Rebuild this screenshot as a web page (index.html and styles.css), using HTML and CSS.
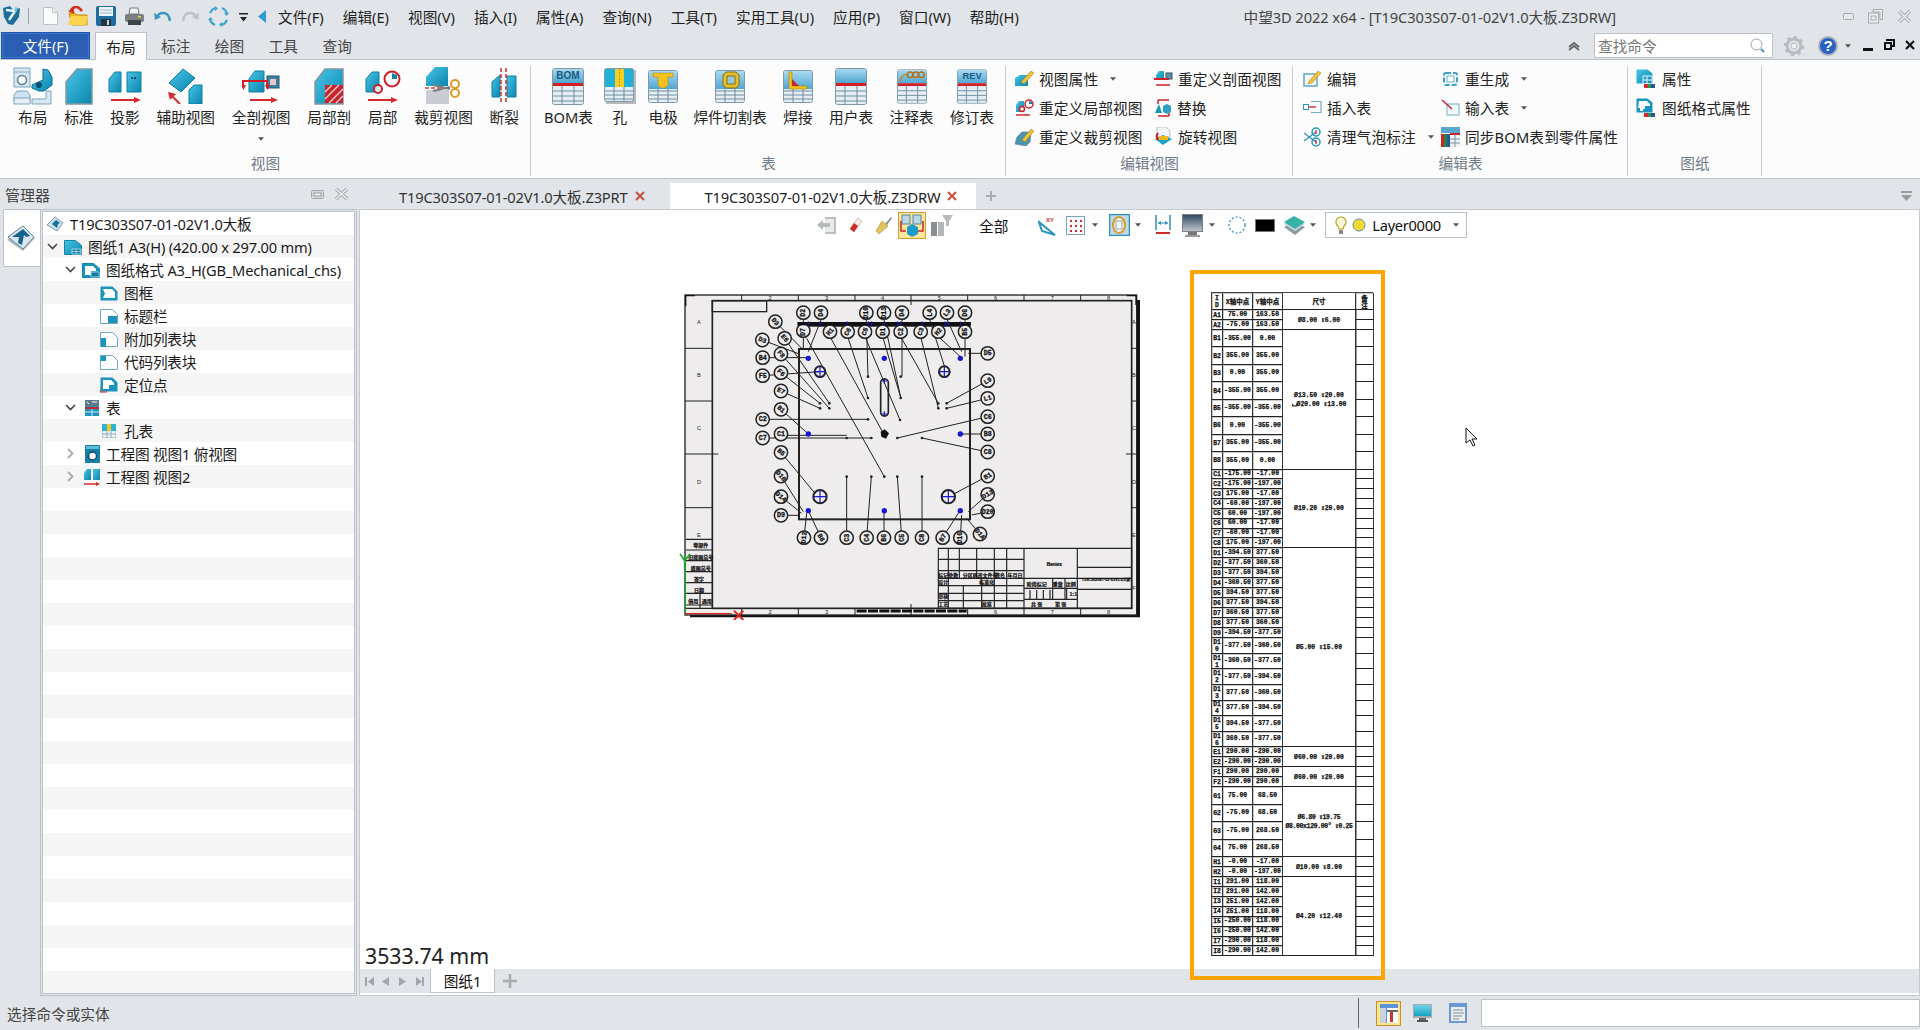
FILE: index.html
```html
<!DOCTYPE html>
<html lang="zh">
<head>
<meta charset="utf-8">
<title>中望3D 2022 x64</title>
<link rel="stylesheet" href="styles.css">
</head>
<body>
<svg class="sprite" width="0" height="0">
<defs>
<linearGradient id="gb" x1="0" y1="0" x2="1" y2="1"><stop offset="0" stop-color="#46c6e6"/><stop offset="1" stop-color="#0d84ad"/></linearGradient>
<linearGradient id="gh" x1="0" y1="0" x2="0" y2="1"><stop offset="0" stop-color="#a9d9f0"/><stop offset="1" stop-color="#4fa6d3"/></linearGradient>
<linearGradient id="gs" x1="0" y1="0" x2="0" y2="1"><stop offset="0" stop-color="#6fd2e8"/><stop offset="1" stop-color="#15a4c4"/></linearGradient>
<linearGradient id="gm" x1="0" y1="0" x2="0" y2="1"><stop offset="0" stop-color="#2e4660"/><stop offset="1" stop-color="#c0c8d0"/></linearGradient>
<symbol id="tbl" viewBox="0 0 32 37"><rect x=".5" y=".5" width="31" height="36" rx="2" fill="#e6eef3" stroke="#7d99aa"/><rect x="1" y="1" width="30" height="14" fill="url(#gh)"/><rect x="1" y="15" width="30" height="3" fill="#d11f26"/><path d="M1 23h30M1 28h30M1 33h30M10 18v18M22 18v18" stroke="#6d8da0" fill="none"/></symbol>
<symbol id="tb2" viewBox="0 0 30 33"><rect x=".5" y=".5" width="29" height="32" rx="2" fill="#e6eef3" stroke="#7d99aa"/><rect x="1" y="1" width="28" height="18" fill="url(#gh)"/><path d="M1 21h28M1 25h28M1 29h28M10 19v13M20 19v13" stroke="#6d8da0" fill="none"/></symbol>
<symbol id="sht" viewBox="0 0 18 16"><path d="M.5 1.500h11l6 5v9H.5z" fill="url(#gb)" stroke="#1482a8"/><path d="M8 10h9v5H8zM12 10v5M8 12.500h9" fill="#0d7ea6" stroke="#d5eef6" stroke-width=".7"/></symbol>
<symbol id="fmt" viewBox="0 0 18 16"><path d="M.5 1.500h11l6 5v9H.5z" fill="#1a93bd" stroke="#1482a8"/><path d="M3 4h8l3 3v2H9v4H3z" fill="#fff"/><path d="M9 10h8v5H9z" fill="#0d7ea6" stroke="#d5eef6" stroke-width=".7"/></symbol>
<symbol id="pg" viewBox="0 0 18 16"><path d="M.5 1.500h12l5 5v9H.5z" fill="#fff" stroke="#6aa8c4"/></symbol>
<symbol id="dp" viewBox="0 0 7 4"><path d="M0 0h7L3.500 4z" fill="#555"/></symbol>
</defs>
</svg>

<div class="app">
  <header class="titlebar">
    <svg class="logo" width="20" height="22" viewBox="0 0 20 22"><path d="M1 3l7-2 3 4 7-2-1 9-6 8-5-1-4-7z" fill="#1c6e9b"/><path d="M4 5l9 1-6 9" fill="none" stroke="#e8f4f8" stroke-width="2.500"/><path d="M13 2l3 1-3 6z" fill="#66c4dd"/></svg>
    <span class="vsep"></span>
    <span class="qa"><svg width="15" height="18" viewBox="0 0 15 18"><path d="M.5.500h9l5 5v12H.500z" fill="#fbfbfb" stroke="#bcc3c9"/><path d="M9.500.500v5h5" fill="#e9edf0" stroke="#bcc3c9"/></svg></span>
    <span class="qa"><svg width="20" height="20" viewBox="0 0 20 20"><path d="M1 7h6l2 2h10v10H4z" fill="#f2b91f" stroke="#c78f10"/><path d="M0 19l3-9h17l-2 9z" fill="#fbd34d"/><path d="M3 6a5 5 0 0 1 9-3l2 2" fill="none" stroke="#d42f1c" stroke-width="2.500"/><path d="M0 5l6 3v-6z" fill="#d42f1c"/></svg></span>
    <span class="qa"><svg width="20" height="20" viewBox="0 0 20 20"><rect width="20" height="20" rx="2" fill="#1e6c9f"/><rect x="3" y="1" width="14" height="9" fill="#eef4f7"/><path d="M4 4h12M4 7h12" stroke="#9fb8c6"/><rect x="5" y="13" width="10" height="7" fill="#26343f"/><rect x="11" y="14" width="2" height="5" fill="#ccd5da"/></svg></span>
    <span class="qa"><svg width="19" height="18" viewBox="0 0 19 18"><path d="M5 1h8l1 6H4z" fill="#eef0f1" stroke="#777"/><rect x="0" y="7" width="19" height="8" rx="2" fill="#7a7f84"/><rect x="3" y="13" width="13" height="5" fill="#3e4347"/><rect x="13" y="9" width="3" height="1.500" fill="#e9d53d"/></svg></span>
    <span class="qa"><svg width="17" height="11" viewBox="0 0 17 11"><path d="M3 6a6.500 6.500 0 0 1 12 0l1 4" fill="none" stroke="#3f94c0" stroke-width="2.500"/><path d="M0 2l1 7 6-3z" fill="#3f94c0"/></svg></span>
    <span class="qa"><svg width="17" height="11" viewBox="0 0 17 11"><path d="M14 6a6.500 6.500 0 0 0-12 0l-1 4" fill="none" stroke="#bcc2c6" stroke-width="2.500"/><path d="M17 2l-1 7-6-3z" fill="#bcc2c6"/></svg></span>
    <span class="qa"><svg width="21" height="21" viewBox="0 0 21 21"><path d="M7 2a9 9 0 0 0-5 5M14 2a9 9 0 0 1 5 5M19 14a9 9 0 0 1-5 5M2 14a9 9 0 0 0 5 5" fill="none" stroke="#3da3cf" stroke-width="2.200"/><path d="M7 0v5l3-2.500zM14 21v-5l-3 2.500zM21 7h-5l2.500 3zM0 14h5l-2.500-3z" fill="#3da3cf"/></svg></span>
    <span class="qd"><svg width="9" height="9" viewBox="0 0 9 9"><path d="M0 0h9v1.500H0zM1 4h7L4.500 8.500z" fill="#222"/></svg></span>
    <span class="qb"><svg width="8" height="13" viewBox="0 0 8 13"><path d="M8 0v13L0 6.500z" fill="#2f9bd0"/></svg></span>
    <nav class="menu">
      <span>文件(F)</span><span>编辑(E)</span><span>视图(V)</span><span>插入(I)</span><span>属性(A)</span><span>查询(N)</span><span>工具(T)</span><span>实用工具(U)</span><span>应用(P)</span><span>窗口(W)</span><span>帮助(H)</span>
    </nav>
    <span class="wintitle">中望3D 2022 x64 - [T19C303S07-01-02V1.0大板.Z3DRW]</span>
    <span class="winctl">
      <svg width="11" height="7" viewBox="0 0 11 7"><rect x=".5" y=".5" width="10" height="6" rx="1" fill="#e6e9ec" stroke="#a4a9ae"/></svg>
      <svg width="15" height="15" viewBox="0 0 15 15"><path d="M5 .500h9.500v10H12V3H5z" fill="#eceff1" stroke="#a4a9ae"/><rect x=".5" y="4" width="10" height="10" fill="#eceff1" stroke="#a4a9ae"/><rect x="3" y="7" width="5" height="4" fill="none" stroke="#a4a9ae"/></svg>
      <svg width="15" height="13" viewBox="0 0 15 13"><path d="M2 1l11 11M13 1L2 12" stroke="#a4a9ae" stroke-width="3.500"/><path d="M2 1l11 11M13 1L2 12" stroke="#eef0f2" stroke-width="1.500"/></svg>
    </span>
  </header>

  <div class="tabbar">
    <span class="filebtn">文件(F)</span>
    <span class="rtab active">布局</span>
    <span class="rtab first">标注</span>
    <span class="rtab">绘图</span>
    <span class="rtab">工具</span>
    <span class="rtab">查询</span>
    <span class="tabright">
      <svg width="14" height="10" viewBox="0 0 14 10"><path d="M2 6l5-4 5 4M2 9l5-4 5 4" fill="none" stroke="#666" stroke-width="1.800"/></svg>
      <span class="search"><span>查找命令</span><svg width="15" height="15" viewBox="0 0 15 15"><circle cx="6.500" cy="6.500" r="5.500" fill="#fff" stroke="#9aa0a5"/><path d="M11 11l3 3" stroke="#4f8fb5" stroke-width="2"/></svg></span>
      <svg class="gear" width="20" height="20" viewBox="0 0 20 20"><circle cx="10" cy="10" r="7" fill="none" stroke="#b8bcc0" stroke-width="3"/><circle cx="10" cy="10" r="9" fill="none" stroke="#b8bcc0" stroke-width="2.500" stroke-dasharray="3 4"/><circle cx="10" cy="10" r="3" fill="#eef0f1" stroke="#bbb"/></svg>
      <svg class="help" width="20" height="20" viewBox="0 0 20 20"><circle cx="10" cy="10" r="10" fill="#a9b2bc"/><circle cx="10" cy="10" r="8" fill="#2a62c4"/><text x="10" y="15" class="helpq">?</text></svg>
      <svg class="hd" width="6" height="4"><use href="#dp"/></svg>
      <svg class="wm" width="10" height="3" viewBox="0 0 10 3"><rect width="10" height="3" fill="#111"/></svg>
      <svg class="wr" width="11" height="11" viewBox="0 0 11 11"><path d="M3 2V1h7v6H8" fill="none" stroke="#111" stroke-width="2"/><rect x="1" y="4" width="6" height="6" fill="none" stroke="#111" stroke-width="2"/></svg>
      <svg class="wx" width="10" height="10" viewBox="0 0 10 10"><path d="M1 1l8 8M9 1L1 9" stroke="#111" stroke-width="2.200"/></svg>
    </span>
  </div>

  <section class="ribbon">
    <div class="group g1">
      <div class="large">
        <div class="item"><span class="ic"><svg width="40" height="38" viewBox="0 0 40 38"><path d="M1 1h16v19H1z" fill="#d7e7f2" stroke="#7ea6bf"/><path d="M1 5h16" stroke="#7ea6bf"/><circle cx="9" cy="13" r="4.500" fill="#fff" stroke="#567f97" stroke-width="1.500"/><path d="M19 18l11-5V2l5 1 4 7v8l-8 6h-5l-7-3z" fill="url(#gb)" stroke="#0d6f93"/><circle cx="26" cy="18" r="3" fill="#0a4f6c"/><path d="M1 34V28l3-4h10l3 4v6z" fill="#cfe2ef" stroke="#7ea6bf"/><path d="M1 31h16v6H1z" fill="#e3eef5" stroke="#7ea6bf"/><path d="M19 37v-5h14V24h5v13z" fill="#d7e7f2" stroke="#7ea6bf"/></svg></span><span>布局</span></div>
        <div class="item"><span class="ic"><svg width="28" height="37" viewBox="0 0 28 37"><path d="M1 14L12 1h15v35H1z" fill="url(#gb)" stroke="#8496a3" stroke-width="1.500"/></svg></span><span>标准</span></div>
        <div class="item"><span class="ic"><svg width="34" height="33" viewBox="0 0 34 33"><path d="M1 9l6-7h6v20H1z" fill="url(#gb)" stroke="#0e7ea5"/><path d="M19 2h14v20H19z" fill="url(#gb)" stroke="#0e7ea5"/><path d="M23 8h6" stroke="#114c66" stroke-width="2" stroke-dasharray="2 1"/><path d="M3 30h24" stroke="#d52b30" stroke-width="2"/><path d="M33 30l-7-3v6z" fill="#d52b30"/></svg></span><span>投影</span></div>
        <div class="item"><span class="ic"><svg width="36" height="36" viewBox="0 0 36 36"><path d="M1 15L15 1l12 9-14 14z" fill="url(#gb)" stroke="#0e7ea5"/><path d="M21 22l5-5h8v19H21z" fill="url(#gb)" stroke="#0e7ea5"/><path d="M12 36L3 27" stroke="#d52b30" stroke-width="2"/><path d="M0 24l8 2-6 6z" fill="#d52b30"/></svg></span><span>辅助视图</span></div>
        <div class="item"><span class="ic"><svg width="38" height="33" viewBox="0 0 38 33"><path d="M7 9l6-8h9v21H7z" fill="url(#gb)" stroke="#0e7ea5"/><rect x="25" y="6" width="12" height="12" fill="#3b7fa0" stroke="#20546d"/><rect x="28" y="9" width="6" height="6" fill="#e9c7c8"/><path d="M1 16v-5h24v5" fill="none" stroke="#cf1f25" stroke-width="2"/><path d="M-1 15h5l-2.500 5zM23 15h5l-2.500 5z" fill="#cf1f25"/><path d="M8 30h24" stroke="#d52b30" stroke-width="2"/><path d="M36 30l-7-3v6z" fill="#d52b30"/></svg></span><span>全剖视图</span><svg class="more" width="6" height="4"><use href="#dp"/></svg></div>
        <div class="item"><span class="ic"><svg width="30" height="37" viewBox="0 0 30 37"><path d="M1 14L11 1h18v35H1z" fill="url(#gb)" stroke="#8496a3" stroke-width="1.500"/><rect x="11" y="17" width="18" height="18" fill="#c9242b"/><path d="M11 31l14-14M15 35l14-14M11 24l7-7M22 35l7-7" stroke="#f3c7c8" stroke-width="1.500"/></svg></span><span>局部剖</span></div>
        <div class="item"><span class="ic"><svg width="36" height="33" viewBox="0 0 36 33"><path d="M1 9l6-7h7v20H1z" fill="url(#gb)" stroke="#0e7ea5"/><circle cx="13" cy="19" r="4" fill="#d5eef6" stroke="#cc2027" stroke-width="2"/><circle cx="27" cy="9" r="7.500" fill="#fff" stroke="#cc2027" stroke-width="2"/><path d="M27 9V3l5 2v4z" fill="#0e86ae"/><path d="M3 30h24" stroke="#d52b30" stroke-width="2"/><path d="M33 30l-7-3v6z" fill="#d52b30"/></svg></span><span>局部</span></div>
        <div class="item"><span class="ic"><svg width="36" height="38" viewBox="0 0 36 38"><path d="M1 10L10 0h13v19H1z" fill="url(#gb)"/><path d="M1 23h23v14H1z" fill="#c9cdd1"/><path d="M0 21h22" stroke="#d23b3e" stroke-width="1.500" stroke-dasharray="4 2"/><path d="M8 18l17 4M8 24l17-4" stroke="#7c7c7c" stroke-width="2"/><circle cx="30" cy="17" r="4" fill="none" stroke="#dd9a2a" stroke-width="2"/><circle cx="30" cy="26" r="4" fill="none" stroke="#dd9a2a" stroke-width="2"/></svg></span><span>裁剪视图</span></div>
        <div class="item"><span class="ic"><svg width="26" height="36" viewBox="0 0 26 36"><path d="M1 14l8-7v22H1z" fill="url(#gb)" stroke="#0e7ea5"/><path d="M16 8h9v21h-9z" fill="url(#gb)" stroke="#0e7ea5"/><path d="M10 0v36M15 0v36" stroke="#cf2a2e" stroke-width="1.500" stroke-dasharray="4 2"/></svg></span><span>断裂</span></div>
      </div>
      <div class="glabel">视图</div>
    </div>

    <div class="group g2">
      <div class="large tight">
        <div class="item bom"><span class="ic"><svg width="32" height="37" viewBox="0 0 32 37"><use href="#tbl" width="32" height="37"/><text x="16" y="11" class="ictext">BOM</text></svg></span><span>BOM表</span></div>
        <div class="item hole"><span class="ic"><svg width="32" height="36" viewBox="0 0 32 36"><rect x="2" y="2" width="30" height="34" fill="#b7b9bb"/><rect x=".5" y=".5" width="29" height="33" rx="2" fill="#e6eef3" stroke="#7d99aa"/><rect x="1" y="1" width="28" height="18" fill="#1fb1d7"/><rect x="11" y="1" width="9" height="18" fill="#f5cf22"/><path d="M15.500 1v18" stroke="#c7950f" stroke-dasharray="2 1"/><path d="M1 23h28M1 27h28M1 31h28M10 19v14M20 19v14" stroke="#6d8da0"/></svg></span><span>孔</span></div>
        <div class="item elec"><span class="ic"><svg width="30" height="33" viewBox="0 0 30 33"><use href="#tb2" width="30" height="33"/><path d="M5 3h20v4h-5v8l-3 3h-4l-3-3V7H5z" fill="#f3c21f" stroke="#b48b10" stroke-width=".6"/></svg></span><span>电极</span></div>
        <div class="item"><span class="ic"><svg width="30" height="33" viewBox="0 0 30 33"><use href="#tb2" width="30" height="33"/><path d="M8 5l3-3h10l3 3v10l-3 3H11l-3-3z" fill="#e3bf2d" stroke="#866f12"/><rect x="12" y="6" width="8" height="8" fill="#97c9d9" stroke="#866f12"/></svg></span><span>焊件切割表</span></div>
        <div class="item"><span class="ic"><svg width="30" height="33" viewBox="0 0 30 33"><use href="#tb2" width="30" height="33"/><path d="M6 2h3v14h15v3H6z" fill="#f3c21f" stroke="#a88510" stroke-width=".6"/><path d="M9 9v7h7z" fill="#c9252b"/></svg></span><span>焊接</span></div>
        <div class="item"><span class="ic"><svg width="32" height="37" viewBox="0 0 32 37"><use href="#tbl" width="32" height="37"/></svg></span><span>用户表</span></div>
        <div class="item"><span class="ic"><svg width="30" height="37" viewBox="0 0 32 37"><use href="#tbl" width="32" height="37"/><path d="M3 13c2-7 6-8 9-8" fill="none" stroke="#c78a1a" stroke-width="1.500"/><circle cx="14" cy="6" r="3" fill="none" stroke="#b5701a" stroke-width="1.500"/><circle cx="20" cy="6" r="3" fill="none" stroke="#b5701a" stroke-width="1.500"/><circle cx="26" cy="6" r="3" fill="none" stroke="#b5701a" stroke-width="1.500"/></svg></span><span>注释表</span></div>
        <div class="item"><span class="ic"><svg width="30" height="37" viewBox="0 0 32 37"><use href="#tbl" width="32" height="37"/><text x="16" y="11" class="ictext">REV</text></svg></span><span>修订表</span></div>
      </div>
      <div class="glabel">表</div>
    </div>

    <div class="group g3">
      <div class="small">
        <div class="row w139"><svg width="19" height="18" viewBox="0 0 19 18"><path d="M0 8l5-3h8v11H0z" fill="url(#gb)"/><path d="M6 12L16 1l3 2-10 11z" fill="#f0c238" stroke="#997c1e" stroke-width=".5"/></svg><span>视图属性</span><svg class="dd" width="6" height="4"><use href="#dp"/></svg></div>
        <div class="row"><svg width="19" height="17" viewBox="0 0 19 17"><path d="M2 5l3-4h5v9H2z" fill="url(#gb)"/><rect x="12" y="3" width="6" height="6" fill="#5e8ea6" stroke="#2a5970"/><path d="M0 9h15" stroke="#cf2127" stroke-width="2"/><path d="M2 15h14" stroke="#cf2127" stroke-width="1.500"/></svg><span>重定义剖面视图</span></div>
        <div class="row"><svg width="19" height="18" viewBox="0 0 19 18"><path d="M1 6l3-4h5v11H1z" fill="url(#gb)"/><circle cx="7" cy="10" r="2.500" fill="#fff" stroke="#cc2027" stroke-width="1.500"/><circle cx="14" cy="5" r="4" fill="#fff" stroke="#cc2027" stroke-width="1.500"/><path d="M14 5V2l3 1v2z" fill="#0e86ae"/><path d="M1 16h14" stroke="#d52b30" stroke-width="1.500"/></svg><span>重定义局部视图</span></div>
        <div class="row"><svg width="18" height="18" viewBox="0 0 18 18"><path d="M4 1h11M4 1v4M15 17H4M15 17v-4" fill="none" stroke="#c8252b" stroke-width="1.500"/><path d="M1 14l4-9 3 9z" fill="#1995ba"/><path d="M9 7l4-2 4 2v6l-4 2-4-2z" fill="#2f9fc4"/></svg><span>替换</span></div>
        <div class="row"><svg width="19" height="18" viewBox="0 0 19 18"><path d="M0 16l2-7 5-5h9l-1 10-4 4z" fill="#4a94ad" stroke="#5a7a8a" stroke-width=".6"/><path d="M7 12L16 1l3 2-9 11z" fill="#f0c238" stroke="#997c1e" stroke-width=".5"/></svg><span>重定义裁剪视图</span></div>
        <div class="row"><svg width="19" height="19" viewBox="0 0 19 19"><path d="M3 0h9l4 4v6H3z" fill="#f2f4f5" stroke="#b8bfc4"/><path d="M1 12l8 6 9-6-9-4z" fill="#19a3c9"/><path d="M5 9h9v4H5z" fill="#f3b81e"/><path d="M4 6a6 6 0 0 0 0 7" fill="none" stroke="#cd2027" stroke-width="2"/></svg><span>旋转视图</span></div>
      </div>
      <div class="glabel">编辑视图</div>
    </div>

    <div class="group g4">
      <div class="small">
        <div class="row w138"><svg width="19" height="17" viewBox="0 0 19 17"><rect x="1" y="4" width="13" height="12" fill="#f4f8fa" stroke="#5da6c6" stroke-width="1.500"/><path d="M6 11L15 1l3 2-9 10-4 1z" fill="#f0c238" stroke="#997c1e" stroke-width=".5"/></svg><span>编辑</span></div>
        <div class="row"><svg width="19" height="18" viewBox="0 0 19 18"><rect x="3" y="3" width="13" height="12" rx="2" fill="#f6fafc" stroke="#3fa0c5" stroke-width="2" stroke-dasharray="5 2"/><rect x="6" y="6" width="7" height="6" fill="#fff" stroke="#5cb3d0"/></svg><span>重生成</span><svg class="dd" width="6" height="4"><use href="#dp"/></svg></div>
        <div class="row"><svg width="19" height="13" viewBox="0 0 19 13"><rect x=".5" y="3.500" width="5" height="5" fill="#fff" stroke="#2b94bd"/><path d="M6 6h7" stroke="#c8252b" stroke-width="1.300"/><path d="M8 .500h10v11H8" fill="none" stroke="#73afca" stroke-width="1.200"/></svg><span>插入表</span></div>
        <div class="row"><svg width="19" height="17" viewBox="0 0 19 17"><rect x="6" y="5" width="12" height="11" fill="#f3f8fa" stroke="#73afca"/><path d="M1 1l10 9" stroke="#c8252b" stroke-width="1.500"/></svg><span>输入表</span><svg class="dd" width="6" height="4"><use href="#dp"/></svg></div>
        <div class="row"><svg width="19" height="20" viewBox="0 0 19 20"><circle cx="13" cy="5" r="4" fill="#f5fafc" stroke="#2b94bd" stroke-width="1.500"/><circle cx="13" cy="15" r="4" fill="#f5fafc" stroke="#2b94bd" stroke-width="1.500"/><path d="M1 14L13 5M1 6l12 9" stroke="#2b94bd" stroke-width="1.300"/><path d="M13 3v4M13 13v4" stroke="#c8252b" stroke-width="1.300"/></svg><span>清理气泡标注</span><svg class="dd" width="6" height="4"><use href="#dp"/></svg></div>
        <div class="row"><svg width="19" height="20" viewBox="0 0 19 20"><rect width="19" height="6" fill="#5ba6cf"/><rect y="7" width="19" height="13" fill="#eef3f6"/><rect y="7" width="3" height="13" fill="#c9252b"/><rect x="3" y="7" width="3" height="13" fill="#1f8a36"/><rect x="6" y="7" width="3" height="13" fill="#2b4ea8"/><path d="M9 7h10" stroke="#c9252b" stroke-width="2"/><path d="M9 12h10M9 16h10M14 8v12" stroke="#7b93a3"/></svg><span>同步BOM表到零件属性</span></div>
      </div>
      <div class="glabel">编辑表</div>
    </div>

    <div class="group g5">
      <div class="small one">
        <div class="row"><svg width="19" height="19" viewBox="0 0 19 19"><path d="M.5.500h11l5 4v10H.500z" fill="url(#gb)"/><path d="M7 7h9v8H7zM11 7v8M7 11h9" fill="none" stroke="#e6f6fb"/><rect x="8" y="15" width="4" height="4" fill="#d5272d"/><rect x="12" y="15" width="3" height="4" fill="#1f9e3a"/><rect x="15" y="15" width="4" height="4" fill="#2b4ea8"/></svg><span>属性</span></div>
        <div class="row"><svg width="19" height="19" viewBox="0 0 19 19"><path d="M.5.500h11l5 4v10H.500z" fill="#1a93bd"/><path d="M3 3h8l3 3v2H9v3H7v2H4v-3H2z" fill="#fff"/><rect x="8" y="15" width="4" height="4" fill="#d5272d"/><rect x="12" y="15" width="3" height="4" fill="#1f9e3a"/><rect x="15" y="15" width="4" height="4" fill="#2b4ea8"/></svg><span>图纸格式属性</span></div>
      </div>
      <div class="glabel">图纸</div>
    </div>
  </section>

  <div class="docbar">
    <div class="mgrhead"><span>管理器</span><span class="mgrbtns">
      <svg width="13" height="9" viewBox="0 0 13 9"><rect x=".5" y=".5" width="12" height="8" rx="1" fill="#d5d8db" stroke="#a4a9ae"/><rect x="3" y="3" width="7" height="3" fill="#eef0f2" stroke="#999"/></svg>
      <svg width="15" height="12" viewBox="0 0 15 12"><path d="M2 1l11 10M13 1L2 11" stroke="#a4a9ae" stroke-width="3.500"/><path d="M2 1l11 10M13 1L2 11" stroke="#eef0f2" stroke-width="1.500"/></svg>
    </span></div>
    <div class="doctab"><span>T19C303S07-01-02V1.0大板.Z3PRT</span><svg width="12" height="12" viewBox="0 0 12 12"><path d="M2 2l8 8M10 2l-8 8" stroke="#c4503a" stroke-width="2"/></svg></div>
    <div class="doctab cur"><span>T19C303S07-01-02V1.0大板.Z3DRW</span><svg width="12" height="12" viewBox="0 0 12 12"><path d="M2 2l8 8M10 2l-8 8" stroke="#c4503a" stroke-width="2"/></svg></div>
    <svg class="docadd" width="12" height="12" viewBox="0 0 12 12"><path d="M6 1v10M1 6h10" stroke="#a8adb2" stroke-width="2"/></svg>
    <svg class="docmenu" width="11" height="10" viewBox="0 0 11 10"><path d="M0 0h11v2H0z" fill="#9b9b9b"/><path d="M0 4h11L5.500 10z" fill="#9b9b9b"/></svg>
  </div>

  <main class="main">
    <aside class="side">
      <div class="sidetab"><svg width="30" height="27" viewBox="0 0 30 27"><path d="M1 15L17 26l12-13L25 10 15 22 3 13z" fill="#aeb9c1"/><path d="M2 12L17 1l11 11-11 12z" fill="#dbe8f0" stroke="#5f8396"/><path d="M6 12l11-8 7 7-4 1-2-2-2 10-4-2 1-6z" fill="#15648f"/></svg></div>
    </aside>
    <div class="treeframe">
      <div class="tree">
        <div class="tr l0"><svg width="18" height="16" viewBox="0 0 18 16"><path d="M1 9l8-8 8 6-6 8z" fill="#cfdfe8" stroke="#7ba0b5"/><path d="M6 8l4-4 4 3-2 1-1 4z" fill="#146f9b"/></svg><span>T19C303S07-01-02V1.0大板</span></div>
        <div class="tr l1"><svg class="chev" width="11" height="7" viewBox="0 0 11 7"><path d="M1 1l4.500 4.500L10 1" fill="none" stroke="#444" stroke-width="1.600"/></svg><svg width="18" height="16"><use href="#sht"/></svg><span>图纸1 A3(H) (420.00 x 297.00 mm)</span></div>
        <div class="tr l2"><svg class="chev" width="11" height="7" viewBox="0 0 11 7"><path d="M1 1l4.500 4.500L10 1" fill="none" stroke="#444" stroke-width="1.600"/></svg><svg width="18" height="16"><use href="#fmt"/></svg><span>图纸格式 A3_H(GB_Mechanical_chs)</span></div>
        <div class="tr l3"><svg width="18" height="16" viewBox="0 0 18 16"><path d="M.5 1.500h12l5 5v9H.5z" fill="#1a93bd"/><path d="M3 4h9l3 3v6H3l2-4.500z" fill="#fff"/></svg><span>图框</span></div>
        <div class="tr l3"><svg width="18" height="16"><use href="#pg"/><rect x="8" y="8" width="9" height="7" fill="#1a93bd"/></svg><span>标题栏</span></div>
        <div class="tr l3"><svg width="18" height="16"><use href="#pg"/><rect x="1" y="7" width="5" height="9" fill="#1a93bd"/></svg><span>附加列表块</span></div>
        <div class="tr l3"><svg width="18" height="16"><use href="#pg"/><rect x="1" y="2" width="5" height="5" fill="#1a93bd"/></svg><span>代码列表块</span></div>
        <div class="tr l3"><svg width="18" height="17" viewBox="0 0 18 17"><path d="M.5 1.500h12l5 5v9H.5z" fill="#1a93bd"/><path d="M3 4h8l3 3v2H9v4H3z" fill="#fff"/><path d="M0 11v5h7" fill="none" stroke="#c8252b"/></svg><span>定位点</span></div>
        <div class="tr l2 lt"><svg class="chev" width="11" height="7" viewBox="0 0 11 7"><path d="M1 1l4.500 4.500L10 1" fill="none" stroke="#444" stroke-width="1.600"/></svg><svg width="14" height="16" viewBox="0 0 14 16"><rect width="14" height="16" fill="#1a93bd"/><rect width="14" height="6" fill="#5d7b8c"/><path d="M2 2l2 2M7 2h5" stroke="#fff"/><rect y="7" width="14" height="2" fill="#c9252b"/><path d="M0 12h14M7 9v7" stroke="#d0e8f1"/></svg><span>表</span></div>
        <div class="tr l3"><svg class="i14" width="14" height="14" viewBox="0 0 14 14"><rect width="14" height="14" fill="#eef3f6" stroke="#93a9b7"/><rect width="14" height="7" fill="#2eb3d6"/><rect x="5" width="4" height="7" fill="#f3c522"/><path d="M0 10h14M5 7v7M9 7v7" stroke="#93a9b7"/></svg><span>孔表</span></div>
        <div class="tr l2 lt"><svg class="chev" width="7" height="11" viewBox="0 0 7 11"><path d="M1 1l4.500 4.500L1 10" fill="none" stroke="#aaa" stroke-width="1.800"/></svg><svg class="i15" width="15" height="18" viewBox="0 0 15 18"><rect width="15" height="18" rx="1" fill="#1482a8"/><rect x="1" y="1" width="13" height="3" fill="#5fbbd6"/><circle cx="7.500" cy="11" r="4" fill="#fff" stroke="#0b4f6c" stroke-width="1.500"/></svg><span>工程图 视图1 俯视图</span></div>
        <div class="tr l2 lt"><svg class="chev" width="7" height="11" viewBox="0 0 7 11"><path d="M1 1l4.500 4.500L1 10" fill="none" stroke="#aaa" stroke-width="1.800"/></svg><svg class="i18" width="18" height="18" viewBox="0 0 18 18"><path d="M1 5l3-4h4v11H1z" fill="url(#gb)"/><path d="M10 1h7v11h-7z" fill="url(#gb)"/><path d="M1 16h13" stroke="#d52b30" stroke-width="1.500"/><path d="M17 16l-4-2v4z" fill="#d52b30"/></svg><span>工程图 视图2</span></div>
      </div>
    </div>

    <div class="view">
      <div class="vtools">
        <svg width="19" height="17" viewBox="0 0 19 17"><path d="M8 1h10v15H8" fill="#e8eaec" stroke="#a9adb1" stroke-width="1.500"/><path d="M0 8l6-5v3h7v4H6v3z" fill="#b8bcbf"/></svg>
        <svg class="m13" width="14" height="16" viewBox="0 0 14 16"><path d="M1 12L9 1l4 3-8 11z" fill="#f2ede6" stroke="#b09b84" stroke-width=".6"/><path d="M1 12l4-6 4 3-4 6z" fill="#cf2a2a"/></svg>
        <svg class="m12" width="17" height="17" viewBox="0 0 17 17"><path d="M10 7l6-7 1 1-5 7z" fill="#8a8f93"/><path d="M1 14l6-10 6 5-9 8z" fill="#e2c35f" stroke="#a88d33" stroke-width=".6"/></svg>
        <span class="activebtn m6"><svg width="24" height="23" viewBox="0 0 24 23"><rect x="2" y="1" width="8" height="9" fill="#bcd8e6" stroke="#54889f"/><rect x="13" y="1" width="8" height="9" fill="#bcd8e6" stroke="#54889f"/><path d="M7 13l5-3 6 3v7l-6 3-5-3z" fill="#1d9ccc"/><path d="M1 7v10h5M23 7v10h-5" fill="none" stroke="#c8252b" stroke-width="1.500"/></svg></span>
        <svg class="m5" width="22" height="21" viewBox="0 0 22 21"><rect y="7" width="6" height="14" fill="#8c8f91"/><rect x="7" y="7" width="6" height="14" fill="#b3b5b7"/><path d="M11 0h11l-4 6v5h-3V6z" fill="#b7b9ba"/></svg>
        <span class="alltext">全部</span>
        <svg class="m30" width="19" height="21" viewBox="0 0 19 21"><text x="12" y="7" class="xy">XY</text><path d="M1 7l16 13L4 16z" fill="none" stroke="#2b94bd" stroke-width="2"/></svg>
        <svg class="m9" width="19" height="19" viewBox="0 0 19 19"><rect x=".5" y=".5" width="18" height="18" fill="#fff" stroke="#7da1b6"/><path d="M4 4h2v2H4zM9 4h2v2H9zM14 4h2v2h-2zM4 9h2v2H4zM9 9h2v2H9zM14 9h2v2h-2zM4 14h2v2H4zM9 14h2v2H9zM14 14h2v2h-2z" fill="#d22a2f"/></svg>
        <svg class="m7" width="6" height="4"><use href="#dp"/></svg>
        <svg class="m11" width="21" height="22" viewBox="0 0 21 22"><rect x=".5" y=".5" width="20" height="21" fill="#bedaea" stroke="#2f8fb7" stroke-width="1.500"/><ellipse cx="10" cy="11" rx="6" ry="8" fill="#eef3f6" stroke="#d89b28" stroke-width="2"/><rect x="7" y="7" width="6" height="8" fill="#fff" stroke="#8aa"/></svg>
        <svg class="m5" width="6" height="4"><use href="#dp"/></svg>
        <svg class="m14" width="16" height="21" viewBox="0 0 16 21"><path d="M1 0v15M15 0v15" stroke="#2f8fb7" stroke-width="1.500"/><path d="M3 8h10" stroke="#2f8fb7"/><path d="M1 18h14" stroke="#cf2a2e" stroke-width="2"/><path d="M3 8l3-2v4zM13 8l-3-2v4z" fill="#2f8fb7"/></svg>
        <svg class="m11" width="21" height="23" viewBox="0 0 21 23"><rect x=".5" y=".5" width="20" height="17" fill="url(#gm)" stroke="#7b8085"/><rect x="6" y="18" width="9" height="3" fill="#777"/><rect x="3" y="21" width="15" height="2" fill="#999"/></svg>
        <svg class="m6" width="6" height="4"><use href="#dp"/></svg>
        <svg class="m13" width="18" height="18" viewBox="0 0 18 18"><circle cx="9" cy="9" r="8" fill="none" stroke="#4e9bc0" stroke-width="1.500" stroke-dasharray="2 2"/></svg>
        <span class="blackswatch m9"></span>
        <svg class="m9" width="21" height="19" viewBox="0 0 21 19"><path d="M0 11l10-5 11 5-10 8z" fill="#8d9ba5"/><path d="M0 8l10-5 11 5-10 7z" fill="#c7d2d8"/><path d="M0 6l10-6 11 6-10 7z" fill="#36b2a6"/></svg>
        <svg class="m5" width="6" height="4"><use href="#dp"/></svg>
        <div class="layerbox m9"><svg width="12" height="19" viewBox="0 0 12 19"><path d="M6 1a5 5 0 0 1 3 9l-1 3H4l-1-3a5 5 0 0 1 3-9z" fill="#fbf9d5" stroke="#b79c2b" stroke-width="1.200"/><rect x="4" y="14" width="4" height="4" fill="#8a8a8a"/></svg><svg class="lc" width="14" height="14" viewBox="0 0 14 14"><circle cx="7" cy="7" r="6" fill="#f2d92f" stroke="#5b8aa8"/></svg><span class="lname">Layer0000</span><svg class="ld" width="6" height="4"><use href="#dp"/></svg></div>
      </div>

      <div class="canvas">
        <svg class="drawing" width="480" height="340" viewBox="0 0 1440 1020">
          <path d="M60 60H1410V1012H60z" fill="#111"/>
          <rect x="45" y="45" width="1355" height="960" fill="#eeeced" stroke="#222" stroke-width="4"/>
          <path d="M45 45h30v4H49v30h-4zM1370 45h30v30h-4V49h-26z" fill="#111"/>
          <rect x="127" y="62" width="1258" height="923" fill="none" stroke="#222" stroke-width="5"/>
          <rect x="127" y="62" width="163" height="33" fill="none" stroke="#222" stroke-width="4"/>
          <path d="M45 205h82M45 363h82M45 522h100M45 683h82M1385 205h15M1385 363h15M1368 522h32M1385 683h15M215 45v17M385 45v17M555 45v17M723 45v30M893 45v17M1062 45v17M1232 45v17M215 985v20M385 985v20M555 985v20M723 972v33M893 985v20M1062 985v20M1232 985v20" stroke="#222" stroke-width="3" fill="none"/>
          <g class="zone">
            <text x="87" y="133">A</text><text x="87" y="291">B</text><text x="87" y="451">C</text><text x="87" y="611">D</text><text x="87" y="771">E</text>
            <text x="1392" y="133">A</text><text x="1392" y="291">B</text><text x="1392" y="451">C</text><text x="1392" y="611">D</text><text x="1392" y="771">E</text><text x="1392" y="931">F</text>
            <text x="300" y="59">2</text><text x="470" y="59">3</text><text x="638" y="59">4</text><text x="808" y="59">5</text><text x="977" y="59">6</text><text x="1147" y="59">7</text><text x="1316" y="59">8</text>
            <text x="300" y="1001">2</text><text x="470" y="1001">3</text><text x="977" y="1001">6</text><text x="1147" y="1001">7</text><text x="1316" y="1001">8</text>
          </g>
          <path d="M560 993h330" stroke="#111" stroke-width="9" stroke-dasharray="30 4"/>
          <rect x="387" y="207" width="513" height="511" fill="none" stroke="#222" stroke-width="6"/>
          <rect x="383" y="126" width="519" height="14" fill="#111"/>
          <path d="M415 125v15M450 125v15M531 125v15M595 125v15M605 125v15M643 125v15M682 125v15M692 125v15M756 125v15M825 125v15M835 125v15M871 125v15" stroke="#1515d0" stroke-width="3"/>
          <path class="leader" d="M400 120v90M453 120l-38 95M589 120l5 170M642 120l50 232M696 120v170M779 118l44 140M831 118l44 97M885 118v112M410 175l233 415M480 170l160 290M533 170l61 184M585 170l105 250M638 170l54 182M692 170l113 200M752 170l53 215M805 170l66 60M316 125l84 85M344 175l134 195M277 180l111 42M278 233h137M333 222l145 163M278 287l172-12M333 278l117 92M333 333l117 52M333 388l82 74M278 418h316M333 466h197M278 474h326M333 517l102 123M333 588l67 107M333 650l62 50M333 706h57M402 773l8-73M453 773l-38-81M530 773V590M590 773l14-183M642 773v-81M695 773l-13-183M756 773V590M818 773l52-81M871 773l4-68M930 762l-40-47M953 220h-58M953 302l-123 68M953 355l-123 30M953 410l-271 64M953 462h-82M953 516l-197-42M953 588l-98 52M953 643l-58 52M953 695l-48 10"/>
          <g class="hole">
            <circle cx="450" cy="275" r="16"/><circle cx="823" cy="275" r="16"/><circle cx="450" cy="650" r="20"/><circle cx="835" cy="650" r="20"/>
          </g>
          <path d="M450 257v36M432 275h36M823 257v36M805 275h36M450 630v40M430 650h40M835 630v40M815 650h40M643 295v16M635 303h16M643 394v16M635 402h16" stroke="#1515d0" stroke-width="3.500"/>
          <rect x="632" y="297" width="23" height="111" rx="11" fill="none" stroke="#222" stroke-width="5"/>
          <path d="M632 455l12-7 13 12-9 16-14-6z" fill="#111"/>
          <g class="bdot"><circle cx="415" cy="235" r="8"/><circle cx="643" cy="235" r="8"/><circle cx="871" cy="235" r="8"/><circle cx="415" cy="462" r="8"/><circle cx="871" cy="462" r="8"/><circle cx="415" cy="692" r="8"/><circle cx="643" cy="692" r="8"/><circle cx="871" cy="692" r="8"/></g>
          <g class="kdot"><circle cx="594" cy="290" r="4"/><circle cx="692" cy="290" r="4"/><circle cx="594" cy="354" r="4"/><circle cx="692" cy="354" r="4"/><circle cx="690" cy="420" r="4"/><circle cx="594" cy="418" r="4"/><circle cx="450" cy="370" r="4"/><circle cx="478" cy="370" r="4"/><circle cx="450" cy="385" r="4"/><circle cx="478" cy="385" r="4"/><circle cx="805" cy="370" r="4"/><circle cx="830" cy="370" r="4"/><circle cx="805" cy="385" r="4"/><circle cx="830" cy="385" r="4"/><circle cx="530" cy="474" r="4"/><circle cx="604" cy="474" r="4"/><circle cx="682" cy="474" r="4"/><circle cx="756" cy="474" r="4"/><circle cx="530" cy="590" r="4"/><circle cx="604" cy="590" r="4"/><circle cx="643" cy="590" r="4"/><circle cx="682" cy="590" r="4"/><circle cx="756" cy="590" r="4"/></g>
          <g class="ball">
            <circle cx="400" cy="152" r="20"/><circle cx="480" cy="155" r="20"/><circle cx="533" cy="155" r="20"/><circle cx="585" cy="155" r="20"/><circle cx="638" cy="155" r="20"/><circle cx="692" cy="155" r="20"/><circle cx="752" cy="155" r="20"/><circle cx="805" cy="155" r="20"/><circle cx="885" cy="155" r="20"/>
            <circle cx="400" cy="98" r="20"/><circle cx="453" cy="98" r="20"/><circle cx="589" cy="98" r="20"/><circle cx="642" cy="98" r="20"/><circle cx="696" cy="98" r="20"/><circle cx="779" cy="98" r="20"/><circle cx="831" cy="98" r="20"/><circle cx="885" cy="98" r="20"/>
            <circle cx="316" cy="125" r="20"/><circle cx="344" cy="175" r="20"/><circle cx="277" cy="180" r="20"/><circle cx="278" cy="233" r="20"/><circle cx="333" cy="222" r="20"/><circle cx="278" cy="287" r="20"/><circle cx="333" cy="278" r="20"/><circle cx="333" cy="333" r="20"/><circle cx="333" cy="388" r="20"/><circle cx="278" cy="418" r="20"/><circle cx="333" cy="462" r="20"/><circle cx="278" cy="474" r="20"/><circle cx="333" cy="517" r="20"/><circle cx="333" cy="588" r="20"/><circle cx="333" cy="650" r="20"/><circle cx="333" cy="706" r="20"/>
            <circle cx="402" cy="773" r="20"/><circle cx="453" cy="773" r="20"/><circle cx="530" cy="773" r="20"/><circle cx="590" cy="773" r="20"/><circle cx="642" cy="773" r="20"/><circle cx="695" cy="773" r="20"/><circle cx="756" cy="773" r="20"/><circle cx="818" cy="773" r="20"/><circle cx="871" cy="773" r="20"/><circle cx="930" cy="762" r="20"/>
            <circle cx="953" cy="220" r="20"/><circle cx="953" cy="302" r="20"/><circle cx="953" cy="355" r="20"/><circle cx="953" cy="410" r="20"/><circle cx="953" cy="462" r="20"/><circle cx="953" cy="516" r="20"/><circle cx="953" cy="588" r="20"/><circle cx="953" cy="643" r="20"/><circle cx="953" cy="695" r="20"/>
          </g>
          <rect x="383" y="126" width="519" height="10" fill="#111"/>
          <path d="M415 125v11M450 125v11M531 125v11M595 125v11M605 125v11M643 125v11M682 125v11M692 125v11M756 125v11M825 125v11M835 125v11M871 125v11" stroke="#1515d0" stroke-width="3"/>
          <g class="btxt">
            <text x="400" y="104" transform="rotate(-90 400 98)">D2</text><text x="453" y="104" transform="rotate(-90 453 98)">D4</text><text x="589" y="104" transform="rotate(-90 589 98)">D10</text><text x="642" y="104" transform="rotate(-90 642 98)">D13</text><text x="696" y="104" transform="rotate(-90 696 98)">D4</text><text x="779" y="104" transform="rotate(-90 779 98)">L4</text><text x="831" y="104" transform="rotate(-50 831 98)">L3</text><text x="885" y="104" transform="rotate(-90 885 98)">D6</text>
            <text x="400" y="162" transform="rotate(-90 400 156)">D7</text><text x="480" y="161" transform="rotate(-50 480 155)">H1</text><text x="533" y="161" transform="rotate(-60 533 155)">C6</text><text x="585" y="161" transform="rotate(-70 585 155)">C5</text><text x="638" y="161" transform="rotate(-90 638 155)">D1</text><text x="692" y="161" transform="rotate(-90 692 155)">C2</text><text x="752" y="161" transform="rotate(-70 752 155)">C3</text><text x="805" y="161" transform="rotate(-50 805 155)">H2</text><text x="885" y="161" transform="rotate(-90 885 155)">B5</text>
            <text x="316" y="131" transform="rotate(50 316 125)">D3</text><text x="344" y="181" transform="rotate(50 344 175)">E6</text><text x="277" y="186" transform="rotate(20 277 180)">D3</text><text x="278" y="239">B4</text><text x="333" y="228" transform="rotate(50 333 222)">F8</text><text x="278" y="293">F5</text><text x="333" y="284" transform="rotate(40 333 278)">F6</text><text x="333" y="339" transform="rotate(25 333 333)">E7</text><text x="333" y="394" transform="rotate(40 333 388)">B1</text><text x="278" y="424">C2</text><text x="333" y="468">C1</text><text x="278" y="480">C7</text><text x="333" y="523" transform="rotate(40 333 517)">B5</text><text x="333" y="594" transform="rotate(50 333 588)">D10</text><text x="333" y="656" transform="rotate(40 333 650)">D14</text><text x="333" y="712">D9</text>
            <text x="402" y="779" transform="rotate(-85 402 773)">D12</text><text x="453" y="779" transform="rotate(60 453 773)">B6</text><text x="530" y="779" transform="rotate(-90 530 773)">C3</text><text x="590" y="779" transform="rotate(-90 590 773)">C4</text><text x="642" y="779" transform="rotate(-90 642 773)">B6</text><text x="695" y="779" transform="rotate(-90 695 773)">C5</text><text x="756" y="779" transform="rotate(-90 756 773)">C8</text><text x="818" y="779" transform="rotate(-60 818 773)">B7</text><text x="871" y="779" transform="rotate(-90 871 773)">D16</text><text x="930" y="768" transform="rotate(50 930 762)">D1A</text>
            <text x="953" y="226">D5</text><text x="953" y="308" transform="rotate(-30 953 302)">L9</text><text x="953" y="361" transform="rotate(-15 953 355)">L1</text><text x="953" y="416">C6</text><text x="953" y="468">B8</text><text x="953" y="522">C8</text><text x="953" y="594" transform="rotate(-30 953 588)">B1</text><text x="953" y="649" transform="rotate(-30 953 643)">D13</text><text x="953" y="701">D20</text>
          </g>
          <path class="tb" d="M805 805h580v180H805zM835 805v90M868 805v90M920 805v90M973 805v90M1010 805v90M1062 805v180M805 838h257M805 872h257M805 895h580M805 917h257M805 940h257M805 962h257M835 895v90M880 917v68M935 895v90M973 895v90M1010 895v90M1062 925h160M1062 958h160M1222 805v180M1222 862h163M1222 928h163M1148 895v63M1185 895v63M1190 925v33M1080 930v28M1100 930v28M1120 930v28M1140 930v28M48 778h79M48 810h79M48 842h79M48 875h79M48 908h79M48 940h79M48 975h79M48 985h79M90 940v45"/>
          <g class="tbt">
            <text x="1153" y="858" class="tbb">Bestex</text><text x="1308" y="904" class="tbn">T19C303S07-01-02V1.0大板</text>
            <text x="820" y="890">标记</text><text x="850" y="890">处数</text><text x="893" y="890">分区</text><text x="945" y="890">更改文件号</text><text x="990" y="890">签名</text><text x="1035" y="890">年月日</text><text x="820" y="912">设计</text><text x="950" y="912">标准化</text><text x="820" y="955">审核</text><text x="820" y="978">工艺</text><text x="950" y="978">批准</text><text x="1100" y="917">阶段标记</text><text x="1163" y="917">重量</text><text x="1202" y="917">比例</text><text x="1210" y="948">1:1</text><text x="1100" y="977">共 张</text><text x="1172" y="977">第 张</text>
            <text x="92" y="800">零部件</text><text x="92" y="838">旧底图总号</text><text x="92" y="870">底图总号</text><text x="87" y="903">签字</text><text x="87" y="936">日期</text><text x="70" y="968">借用</text><text x="110" y="968">通用</text>
          </g>
          <path d="M45 825v178" stroke="#1ca82a" stroke-width="4"/>
          <path d="M45 1001h140" stroke="#d92020" stroke-width="4"/>
          <path d="M30 822l14 20 16-20M44 842v24" fill="none" stroke="#1ca82a" stroke-width="5"/>
          <path d="M192 992l28 28M220 992l-28 28" stroke="#e2241f" stroke-width="6"/>
        </svg>

        <div class="hilite">
          <div class="holetable">
            <span class="c id">I<br>D</span><span class="c cj">X轴中点</span><span class="c cj">Y轴中点</span><span class="c cj wide">尺寸</span><span class="c cj">备<br>注</span>
            <span class="c id">A1</span><span class="c">75.00</span><span class="c">163.50</span><span class="c d s2">Ø8.00 ↧6.00</span><span class="c n"></span>
            <span class="c id">A2</span><span class="c">-75.00</span><span class="c">163.50</span><span class="c n"></span>
            <span class="c id">B1</span><span class="c">-355.00</span><span class="c">0.00</span><span class="c d s8">Ø13.50 ↧20.00<br>⌴Ø20.00 ↧13.00</span><span class="c n"></span>
            <span class="c id">B2</span><span class="c">355.00</span><span class="c">355.00</span><span class="c n"></span>
            <span class="c id">B3</span><span class="c">0.00</span><span class="c">355.00</span><span class="c n"></span>
            <span class="c id">B4</span><span class="c">-355.00</span><span class="c">355.00</span><span class="c n"></span>
            <span class="c id">B5</span><span class="c">-355.00</span><span class="c">-355.00</span><span class="c n"></span>
            <span class="c id">B6</span><span class="c">0.00</span><span class="c">-355.00</span><span class="c n"></span>
            <span class="c id">B7</span><span class="c">355.00</span><span class="c">-355.00</span><span class="c n"></span>
            <span class="c id">B8</span><span class="c">355.00</span><span class="c">0.00</span><span class="c n"></span>
            <span class="c id">C1</span><span class="c">-175.00</span><span class="c">-17.00</span><span class="c d s8">Ø10.20 ↧20.00</span><span class="c n"></span>
            <span class="c id">C2</span><span class="c">-175.00</span><span class="c">-197.00</span><span class="c n"></span>
            <span class="c id">C3</span><span class="c">175.00</span><span class="c">-17.00</span><span class="c n"></span>
            <span class="c id">C4</span><span class="c">-60.00</span><span class="c">-197.00</span><span class="c n"></span>
            <span class="c id">C5</span><span class="c">60.00</span><span class="c">-197.00</span><span class="c n"></span>
            <span class="c id">C6</span><span class="c">60.00</span><span class="c">-17.00</span><span class="c n"></span>
            <span class="c id">C7</span><span class="c">-60.00</span><span class="c">-17.00</span><span class="c n"></span>
            <span class="c id">C8</span><span class="c">175.00</span><span class="c">-197.00</span><span class="c n"></span>
            <span class="c id">D1</span><span class="c">-394.50</span><span class="c">377.50</span><span class="c d s16">Ø5.00 ↧15.00</span><span class="c n"></span>
            <span class="c id">D2</span><span class="c">-377.50</span><span class="c">360.50</span><span class="c n"></span>
            <span class="c id">D3</span><span class="c">-377.50</span><span class="c">394.50</span><span class="c n"></span>
            <span class="c id">D4</span><span class="c">-360.50</span><span class="c">377.50</span><span class="c n"></span>
            <span class="c id">D5</span><span class="c">394.50</span><span class="c">377.50</span><span class="c n"></span>
            <span class="c id">D6</span><span class="c">377.50</span><span class="c">394.50</span><span class="c n"></span>
            <span class="c id">D7</span><span class="c">360.50</span><span class="c">377.50</span><span class="c n"></span>
            <span class="c id">D8</span><span class="c">377.50</span><span class="c">360.50</span><span class="c n"></span>
            <span class="c id">D9</span><span class="c">-394.50</span><span class="c">-377.50</span><span class="c n"></span>
            <span class="c id">D1<br>0</span><span class="c">-377.50</span><span class="c">-360.50</span><span class="c n"></span>
            <span class="c id">D1<br>1</span><span class="c">-360.50</span><span class="c">-377.50</span><span class="c n"></span>
            <span class="c id">D1<br>2</span><span class="c">-377.50</span><span class="c">-394.50</span><span class="c n"></span>
            <span class="c id">D1<br>3</span><span class="c">377.50</span><span class="c">-360.50</span><span class="c n"></span>
            <span class="c id">D1<br>4</span><span class="c">377.50</span><span class="c">-394.50</span><span class="c n"></span>
            <span class="c id">D1<br>5</span><span class="c">394.50</span><span class="c">-377.50</span><span class="c n"></span>
            <span class="c id">D1<br>6</span><span class="c">360.50</span><span class="c">-377.50</span><span class="c n"></span>
            <span class="c id">E1</span><span class="c">290.00</span><span class="c">-290.00</span><span class="c d s2">Ø60.00 ↧20.00</span><span class="c n"></span>
            <span class="c id">E2</span><span class="c">-290.00</span><span class="c">-290.00</span><span class="c n"></span>
            <span class="c id">F1</span><span class="c">290.00</span><span class="c">290.00</span><span class="c d s2">Ø60.00 ↧20.00</span><span class="c n"></span>
            <span class="c id">F2</span><span class="c">-290.00</span><span class="c">290.00</span><span class="c n"></span>
            <span class="c id">G1</span><span class="c">75.00</span><span class="c">68.50</span><span class="c d s4 narrow">Ø6.80 ↧19.75<br>Ø8.00x120.00° ↧0.25</span><span class="c n"></span>
            <span class="c id">G2</span><span class="c">-75.00</span><span class="c">68.50</span><span class="c n"></span>
            <span class="c id">G3</span><span class="c">-75.00</span><span class="c">268.50</span><span class="c n"></span>
            <span class="c id">G4</span><span class="c">75.00</span><span class="c">268.50</span><span class="c n"></span>
            <span class="c id">H1</span><span class="c">-0.00</span><span class="c">-17.00</span><span class="c d s2">Ø10.00 ↧8.00</span><span class="c n"></span>
            <span class="c id">H2</span><span class="c">-0.00</span><span class="c">-197.00</span><span class="c n"></span>
            <span class="c id">I1</span><span class="c">291.00</span><span class="c">118.00</span><span class="c d s8">Ø4.20 ↧12.40</span><span class="c n"></span>
            <span class="c id">I2</span><span class="c">291.00</span><span class="c">142.00</span><span class="c n"></span>
            <span class="c id">I3</span><span class="c">251.00</span><span class="c">142.00</span><span class="c n"></span>
            <span class="c id">I4</span><span class="c">251.00</span><span class="c">118.00</span><span class="c n"></span>
            <span class="c id">I5</span><span class="c">-250.00</span><span class="c">118.00</span><span class="c n"></span>
            <span class="c id">I6</span><span class="c">-250.00</span><span class="c">142.00</span><span class="c n"></span>
            <span class="c id">I7</span><span class="c">-290.00</span><span class="c">118.00</span><span class="c n"></span>
            <span class="c id">I8</span><span class="c">-290.00</span><span class="c">142.00</span><span class="c n"></span>
          </div>
        </div>

        <svg class="cursor" width="13" height="20" viewBox="0 0 13 20"><path d="M1 1v15l4-3 3 6 2-1-3-6h5z" fill="#fff" stroke="#111"/></svg>
        <div class="readout">3533.74 mm</div>
      </div>

      <div class="sheetbar">
        <svg width="59" height="11" viewBox="0 0 59 11"><path d="M0 1h2v9H0zM9 1v9L3 5.500zM24 1v9l-7-4.500zM34 1v9l7-4.500zM51 1v9l6-4.500zM57 1h2v9h-2z" fill="#a2a6aa"/></svg>
        <span class="sheet">图纸1</span>
        <svg class="sheetadd" width="14" height="14" viewBox="0 0 14 14"><path d="M7 0v14M0 7h14" stroke="#aaa" stroke-width="2.500"/></svg>
      </div>
    </div>
  </main>

  <footer class="status">
    <span class="stext">选择命令或实体</span>
    <span class="ssep"></span>
    <span class="sactive"><svg width="18" height="19" viewBox="0 0 18 19"><rect width="18" height="19" fill="#5f93d8"/><rect x="0" y="4" width="6" height="15" fill="#c9d3de"/><rect x="7" y="4" width="11" height="15" fill="#fff"/><rect x="10" y="6" width="3" height="12" fill="#c9332f"/><path d="M7 7h11" stroke="#666" stroke-width="2"/></svg></span>
    <svg class="smon" width="19" height="18" viewBox="0 0 19 18"><rect width="19" height="14" fill="#a7abaf"/><rect x="1" y="1" width="17" height="11" fill="url(#gs)"/><rect x="6" y="14" width="7" height="2" fill="#666"/><rect x="4" y="16" width="11" height="2" fill="#555"/></svg>
    <svg class="sdoc" width="18" height="20" viewBox="0 0 18 20"><rect width="18" height="20" fill="#6d97d4"/><rect x="2" y="4" width="14" height="14" fill="#e9edf2"/><path d="M4 7h10M4 10h11M4 13h9M4 16h6" stroke="#7c8a99"/></svg>
    <span class="sinput"></span>
  </footer>
</div>
</body>
</html>
```
FILE: styles.css
```css
* { box-sizing: border-box; }
html, body { margin: 0; padding: 0; }
body { width: 1920px; height: 1030px; overflow: hidden; font-family: "Noto Sans", "Noto Sans CJK SC", sans-serif; font-size: 14.67px; color: #222; background: #e1e5e9; }
svg { display: block; flex-shrink: 0; }
.sprite { position: absolute; }
.app { width: 1920px; height: 1030px; display: flex; flex-direction: column; }

.titlebar { height: 32px; display: flex; align-items: center; padding-left: 2px; }
.logo { margin-right: 6px; }
.vsep { width: 1px; height: 16px; background: #9aa0a5; margin-right: 7px; }
.qa { width: 28px; display: flex; justify-content: center; }
.qd { width: 18px; display: flex; justify-content: center; margin-left: 2px; padding-top: 2px; }
.qb { width: 20px; display: flex; justify-content: center; }
.menu { display: flex; gap: 19px; margin-left: 6px; color: #1e1e1e; }
.wintitle { margin-left: auto; color: #444; letter-spacing: -.08px; }
.winctl { display: flex; align-items: center; gap: 14px; margin-left: 227px; padding-right: 8px; }

.tabbar { height: 28px; display: flex; align-items: flex-end; border-bottom: 1px solid #bcc2c7; position: relative; }
.filebtn { width: 89px; height: 27px; margin-left: 1px; background: #2b5fb3; border: 1px solid #1f55b5; box-shadow: inset 0 0 0 1px #3f74c4; color: #fff; display: flex; align-items: center; justify-content: center; }
.rtab { height: 27px; margin-left: 24.500px; display: flex; align-items: center; color: #444; }
.rtab.active { width: 52px; height: 28px; margin: 0 0 -1px 5px; justify-content: center; background: #fcfcfc; border: 1px solid #bcc2c7; border-bottom: 0; color: #222; }
.rtab.first { margin-left: 14px; }
.tabright { margin-left: auto; height: 27px; display: flex; align-items: center; padding-right: 5px; }
.search { width: 179px; height: 25px; margin-left: 13px; background: #fff; border: 1px solid #bcc2c7; display: flex; align-items: center; justify-content: space-between; padding: 0 7px 0 3px; color: #777; }
.gear { margin-left: 11px; }
.help { margin-left: 14px; }
.helpq { font: bold 15px "Liberation Sans", sans-serif; fill: #fff; text-anchor: middle; }
.hd { margin-left: 7px; }
.wm { margin-left: 12px; margin-top: 8px; }
.wr { margin-left: 11px; margin-top: -3px; }
.wx { margin-left: 10px; margin-top: -2px; }

.ribbon { height: 119px; background: #fcfcfc; border-bottom: 1px solid #bcc2c7; display: flex; }
.group { position: relative; display: flex; flex-direction: column; min-height: 0; }
.group::after { content: ""; position: absolute; right: 0; top: 6px; bottom: 2px; width: 1px; background: #c8ccd0; }
.g1 { width: 531px; }
.g2 { width: 475px; }
.g3 { width: 287px; }
.g4 { width: 335px; }
.g5 { width: 134px; }
.large { flex: 1; min-height: 0; display: flex; gap: 16.800px; padding: 7px 0 0 18px; }
.large.tight { padding-left: 13px; gap: 16.500px; }
.item { display: flex; flex-direction: column; align-items: center; position: relative; }
.item > span:not(.ic) { line-height: 24px; white-space: nowrap; }
.ic { height: 38px; width: 0; display: flex; justify-content: center; align-items: center; }
.more { margin-top: 8px; }
.bom { margin-right: 3px; }
.hole { margin-right: 5px; }
.elec { margin-right: -1px; }
.ictext { font: bold 10px "Liberation Sans", sans-serif; fill: #1a5a82; text-anchor: middle; }
.glabel { height: 30px; flex-shrink: 0; text-align: center; line-height: 30px; color: #6f7b87; }
.small { flex: 1; min-height: 0; display: grid; grid-template-columns: 139px auto; grid-auto-rows: 29px; align-content: start; padding: 4px 0 0 9px; }
.g4 .small { padding-left: 10px; grid-template-columns: 138px auto; }
.small.one { grid-template-columns: auto; padding-left: 8px; }
.g5 .row { gap: 7px; }
.row { display: flex; align-items: center; gap: 5px; white-space: nowrap; letter-spacing: .15px; }
.dd { margin-left: 7px; }

.docbar { height: 30px; display: flex; align-items: flex-end; position: relative; }
.mgrhead { width: 359px; height: 30px; padding: 0 8px 0 5px; display: flex; align-items: center; justify-content: space-between; color: #444; font-size: 15px; }
.mgrbtns { display: flex; align-items: center; gap: 10px; margin-right: 2px; }
.doctab { height: 26px; display: flex; align-items: center; gap: 6px; padding: 0 24px 0 40px; color: #333; letter-spacing: -.15px; }
.doctab.cur { background: #fff; padding: 0 18px 0 35px; margin-left: 0; color: #222; }
.docadd { margin: 0 0 7px 9px; }
.docmenu { margin: 0 8px 8px auto; }

.main { flex: 1; display: flex; min-height: 0; }
.side { width: 40px; padding-left: 3px; }
.sidetab { height: 58px; background: #fff; border: 1px solid #bcc2c7; border-right: 0; padding: 15px 0 0 2px; }
.treeframe { width: 317px; border: 1px solid #bcc2c7; padding: 1px; }
.tree { height: 100%; border: 1px solid #bcc2c7; background: repeating-linear-gradient(#fff 0 23px, #f5f5f5 23px 46px); overflow: hidden; }
.tr { height: 23px; display: flex; align-items: center; gap: 6px; color: #1a1a1a; white-space: nowrap; letter-spacing: -.2px; }
.l0 { padding-left: 3px; }
.l1 { padding-left: 4px; }
.l2 { padding-left: 22px; }
.l3 { padding-left: 57px; }
.chev { width: 11px; }
.lt { gap: 7px; }
.lt .chev { margin-right: 2px; }
.i14 { margin: 0 2px; }
.i15 { margin-right: -1px; }
.i18 { margin: 0 -2px; }

.view { flex: 1; margin-left: 2px; background: #fff; border: 1px solid #c4c9ce; display: flex; flex-direction: column; min-width: 0; }
.vtools { height: 30px; display: flex; align-items: center; padding-left: 457px; flex-shrink: 0; }
.m5 { margin-left: 5px; }
.m6 { margin-left: 6px; }
.m7 { margin-left: 7px; }
.m9 { margin-left: 9px; }
.m11 { margin-left: 11px; }
.m12 { margin-left: 12px; }
.m13 { margin-left: 13px; }
.m14 { margin-left: 14px; }
.m30 { margin-left: 30px; }
.activebtn { width: 28px; height: 27px; background: #ffe69a; border: 1px solid #d49a33; display: flex; align-items: center; justify-content: center; }
.alltext { margin-left: 26px; color: #111; }
.xy { font: bold 6px "Liberation Sans", sans-serif; fill: #c8252b; text-anchor: middle; }
.blackswatch { width: 20px; height: 13px; background: #000; border: 1px solid #777; }
.layerbox { width: 142px; height: 26px; background: #fff; border: 1px solid #bcc2c7; display: flex; align-items: center; padding-left: 9px; color: #111; }
.lc { margin: 0 6px 0 5px; }
.lname { letter-spacing: -.3px; }
.ld { margin-left: auto; margin-right: 7px; }

.canvas { flex: 1; position: relative; z-index: 1; min-height: 0; }
.drawing { position: absolute; left: 310px; top: 40px; }
.leader { fill: none; stroke: #222; stroke-width: 3; }
.zone text { font: 17px "Liberation Sans", sans-serif; fill: #222; text-anchor: middle; }
.hole circle { fill: none; stroke: #222; stroke-width: 6; }
.bdot circle { fill: #1515d0; }
.kdot circle { fill: #222; }
.ball circle { fill: #eeeced; stroke: #222; stroke-width: 4.500; }
.btxt text { font: bold 20px "Liberation Mono", monospace; fill: #111; stroke: #111; stroke-width: .8; text-anchor: middle; }
.tb { fill: none; stroke: #222; stroke-width: 3.500; }
.tbt text { font: bold 15px "Noto Sans CJK SC", sans-serif; fill: #111; stroke: #111; stroke-width: .6; text-anchor: middle; }
.tbt .tbb { font: bold 17px "Liberation Serif", serif; }
.tbt .tbn { font-size: 11px; }

.hilite { position: absolute; left: 830px; top: 30px; width: 195px; height: 710px; border: 4px solid #ffa500; padding: 18px 0 0 17px; }
.holetable { width: 162px; display: grid; grid-template-columns: 11px 30px 30px 73px 18px;
  grid-template-rows: 17px 10px 10px repeat(8, 17.45px) repeat(8, 9.85px) repeat(9, 10px) repeat(7, 15.6px) repeat(4, 10px) repeat(4, 17.45px) repeat(2, 10px) repeat(8, 9.9px);
  background: #fff; border-top: 1px solid #444; border-left: 1px solid #444; font: bold 6.4px/6.4px "Liberation Mono", "DejaVu Sans Mono", monospace; color: #111; -webkit-text-stroke: .25px #111; }
.c { display: flex; align-items: center; justify-content: center; text-align: center; padding-top: 1px; border-right: 1px solid #333; border-bottom: 1px solid #222; box-shadow: inset 1px 1px 0 #c9c9c9; white-space: nowrap; overflow: hidden; }
.id { line-height: 7px; }
.cj { font: bold 6.5px/7px "Noto Sans CJK SC", sans-serif; }
.d, .wide, .n { box-shadow: none; }
.n { box-shadow: inset 1px 0 0 #999; }
.s2 { grid-row: span 2; }
.s4 { grid-row: span 4; }
.s8 { grid-row: span 8; }
.s16 { grid-row: span 16; }
.d { font-size: 6.4px; line-height: 9px; }
.narrow { letter-spacing: -.3px; }

.cursor { position: absolute; left: 1105px; top: 187px; }
.readout { position: absolute; left: 5px; bottom: 0; font-size: 21.300px; line-height: 26px; color: #222; }

.sheetbar { height: 24px; margin-bottom: 2px; background: #e1e5e9; display: flex; align-items: center; padding-left: 5px; flex-shrink: 0; }
.sheet { width: 65px; height: 24px; margin-left: 6px; background: #fff; border-right: 1px solid #bcc2c7; border-left: 1px solid #bcc2c7; border-bottom: 1px solid #bcc2c7; display: flex; align-items: center; justify-content: center; color: #111; }
.sheetadd { margin-left: 8px; }

.status { height: 34px; display: flex; align-items: center; padding-left: 7px; color: #444; }
.stext { width: 1351px; }
.ssep { width: 1px; height: 30px; background: #666; }
.sactive { width: 25px; height: 25px; margin-left: 17px; background: #ffe58a; border: 1px solid #c98f2f; display: flex; align-items: center; justify-content: center; }
.smon { margin-left: 12px; }
.sdoc { margin-left: 17px; }
.sinput { width: 439px; height: 28px; margin-left: 14px; background: #fff; border: 1px solid #bcc2c7; }
```
